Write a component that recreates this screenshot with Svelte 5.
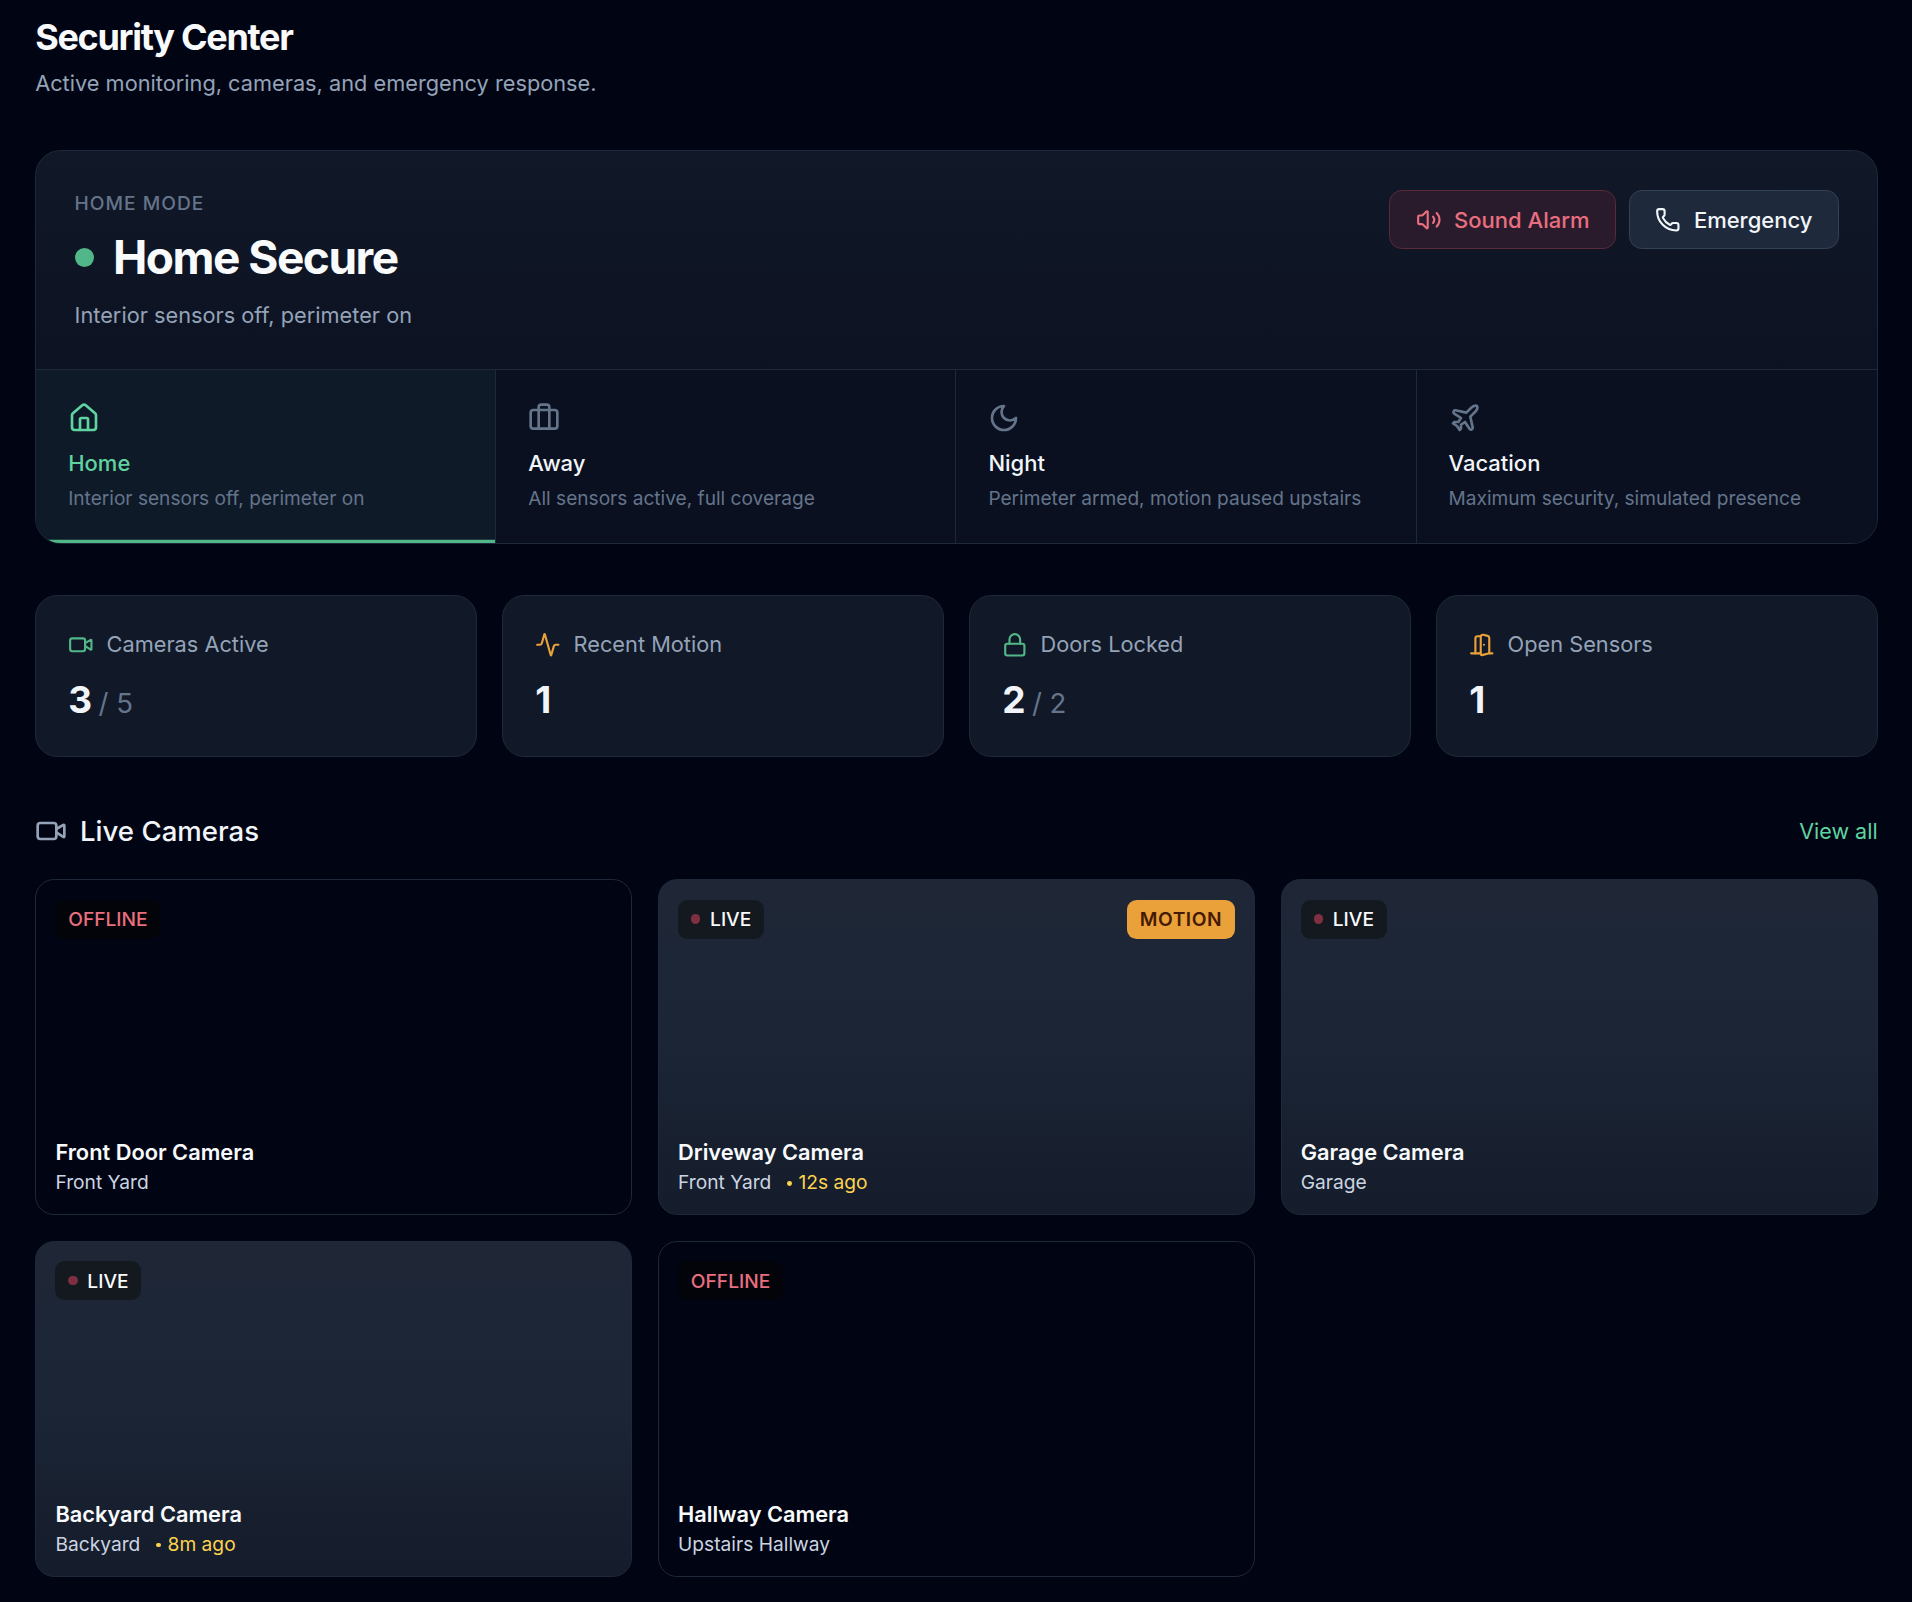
<script>
  const icons = {
    house: ['M15 21v-8a1 1 0 0 0-1-1h-4a1 1 0 0 0-1 1v8', 'M3 10a2 2 0 0 1 .709-1.528l7-6a2 2 0 0 1 2.582 0l7 6A2 2 0 0 1 21 10v9a2 2 0 0 1-2 2H5a2 2 0 0 1-2-2z'],
    briefcase: ['M16 20V4a2 2 0 0 0-2-2h-4a2 2 0 0 0-2 2v16', 'M4 6h16a2 2 0 0 1 2 2v10a2 2 0 0 1-2 2H4a2 2 0 0 1-2-2V8a2 2 0 0 1 2-2z'],
    moon: ['M12 3a6 6 0 0 0 9 9 9 9 0 1 1-9-9Z'],
    plane: ['M17.8 19.2 16 11l3.5-3.5C21 6 21.5 4 21 3c-1-.5-3 0-4.5 1.5L13 8 4.8 6.2c-.5-.1-.9.1-1.1.5l-.3.5c-.2.5-.1 1 .3 1.3L9 12l-2 3H4l-1 1 3 2 2 3 1-1v-3l3-2 3.5 5.3c.3.4.8.5 1.3.3l.5-.2c.4-.3.6-.7.5-1.2z'],
    volume: ['M11 4.702a.705.705 0 0 0-1.203-.498L6.413 7.587A1.4 1.4 0 0 1 5.416 8H3a1 1 0 0 0-1 1v6a1 1 0 0 0 1 1h2.416a1.4 1.4 0 0 1 .997.413l3.383 3.384A.705.705 0 0 0 11 19.298z', 'M16 9a5 5 0 0 1 0 6', 'M19.364 18.364a9 9 0 0 0 0-12.728'],
    phone: ['M13.832 16.568a1 1 0 0 0 1.213-.303l.355-.465A2 2 0 0 1 17 15h3a2 2 0 0 1 2 2v3a2 2 0 0 1-2 2A18 18 0 0 1 2 4a2 2 0 0 1 2-2h3a2 2 0 0 1 2 2v3a2 2 0 0 1-.8 1.6l-.468.351a1 1 0 0 0-.292 1.233 14 14 0 0 0 6.392 6.384'],
    video: ['m16 13 5.223 3.482a.5.5 0 0 0 .777-.416V7.87a.5.5 0 0 0-.752-.432L16 10.5', 'M4 6h10a2 2 0 0 1 2 2v8a2 2 0 0 1-2 2H4a2 2 0 0 1-2-2V8a2 2 0 0 1 2-2z'],
    activity: ['M22 12h-2.48a2 2 0 0 0-1.93 1.46l-2.35 8.36a.25.25 0 0 1-.48 0L9.24 2.18a.25.25 0 0 0-.48 0l-2.35 8.36A2 2 0 0 1 4.49 12H2'],
    lock: ['M5 11h14a2 2 0 0 1 2 2v7a2 2 0 0 1-2 2H5a2 2 0 0 1-2-2v-7a2 2 0 0 1 2-2z', 'M7 11V7a5 5 0 0 1 10 0v4'],
    door: ['M11 20H2', 'M11 4.562v16.157a1 1 0 0 0 1.242.97L19 20V5.562a2 2 0 0 0-1.515-1.94l-4-1A2 2 0 0 0 11 4.561z', 'M11 4H8a2 2 0 0 0-2 2v14', 'M14 12h.01', 'M22 20h-3']
  };

  const modes = [
    { icon: 'house', name: 'Home', desc: 'Interior sensors off, perimeter on', active: true },
    { icon: 'briefcase', name: 'Away', desc: 'All sensors active, full coverage' },
    { icon: 'moon', name: 'Night', desc: 'Perimeter armed, motion paused upstairs' },
    { icon: 'plane', name: 'Vacation', desc: 'Maximum security, simulated presence' }
  ];

  const stats = [
    { icon: 'video', tone: 'green', label: 'Cameras Active', value: '3', total: '/ 5' },
    { icon: 'activity', tone: 'amber', label: 'Recent Motion', value: '1' },
    { icon: 'lock', tone: 'green', label: 'Doors Locked', value: '2', total: '/ 2' },
    { icon: 'door', tone: 'amber', label: 'Open Sensors', value: '1' }
  ];

  const cameras = [
    { name: 'Front Door Camera', place: 'Front Yard', live: false },
    { name: 'Driveway Camera', place: 'Front Yard', live: true, motion: true, ago: '12s ago' },
    { name: 'Garage Camera', place: 'Garage', live: true },
    { name: 'Backyard Camera', place: 'Backyard', live: true, ago: '8m ago' },
    { name: 'Hallway Camera', place: 'Upstairs Hallway', live: false }
  ];
</script>

{#snippet icon(name, cls)}
  <svg class={cls} viewBox="0 0 24 24" fill="none" stroke="currentColor" stroke-width="2" stroke-linecap="round" stroke-linejoin="round" aria-hidden="true">
    {#each icons[name] as d}<path {d} />{/each}
  </svg>
{/snippet}

<main class="page">
  <header class="head">
    <h1>Security Center</h1>
    <p>Active monitoring, cameras, and emergency response.</p>
  </header>

  <section class="hero">
    <div class="hero-top">
      <div>
        <div class="eyebrow">HOME MODE</div>
        <div class="status"><span class="status-dot"></span><h2>Home Secure</h2></div>
        <p class="status-desc">Interior sensors off, perimeter on</p>
      </div>
      <div class="actions">
        <button class="btn danger">{@render icon('volume', 'btn-icon')}Sound Alarm</button>
        <button class="btn plain">{@render icon('phone', 'btn-icon')}Emergency</button>
      </div>
    </div>
    <div class="modes">
      {#each modes as m}
        <div class="mode" class:active={m.active}>
          {@render icon(m.icon, 'mode-icon')}
          <div class="mode-name">{m.name}</div>
          <div class="mode-desc">{m.desc}</div>
        </div>
      {/each}
    </div>
  </section>

  <section class="stats">
    {#each stats as s}
      <div class="stat">
        <div class="stat-label">
          {@render icon(s.icon, 'stat-icon ' + s.tone)}
          <span>{s.label}</span>
        </div>
        <div class="stat-value">{s.value}{#if s.total}<span class="stat-total">{s.total}</span>{/if}</div>
      </div>
    {/each}
  </section>

  <section>
    <div class="section-head">
      <div class="section-title">{@render icon('video', 'section-icon')}<h3>Live Cameras</h3></div>
      <span class="view-all">View all</span>
    </div>
    <div class="cams">
      {#each cameras as c}
        <article class="cam" class:on={c.live}>
          <div class="badges">
            {#if c.live}
              <span class="badge live"><i></i>LIVE</span>
            {:else}
              <span class="badge offline">OFFLINE</span>
            {/if}
            {#if c.motion}<span class="badge motion">MOTION</span>{/if}
          </div>
          <div class="cam-info">
            <div class="cam-name">{c.name}</div>
            <div class="cam-place">{c.place}{#if c.ago}<span class="ago"><i></i>{c.ago}</span>{/if}</div>
          </div>
        </article>
      {/each}
    </div>
  </section>
</main>

<style>
  :global(body) {
    margin: 0;
    background: #010413;
  }
  .page {
    box-sizing: border-box;
    width: 1912px;
    height: 1602px;
    padding: 13.5px 34.4px 25.6px 35.2px;
    font-family: Inter, "Liberation Sans", sans-serif;
    color: #f1f5f9;
    overflow: hidden;
  }
  .head h1 {
    margin: 0;
    font-size: 36px;
    line-height: 46px;
    font-weight: 700;
    letter-spacing: -1.3px;
    color: #f8fafc;
  }
  .head p {
    margin: 7.5px 0 0;
    font-size: 21.76px;
    line-height: 32px;
    color: #94a3b8;
  }

  .hero {
    margin-top: 51.2px;
    border: 1px solid #1e293b;
    border-radius: 25.6px;
    overflow: hidden;
    background: linear-gradient(180deg, #111827 0%, #0c1222 56%, #0a101f 100%);
  }
  .hero-top {
    display: flex;
    justify-content: space-between;
    align-items: flex-start;
    padding: 38.4px 37.6px 38.4px 38.4px;
    height: 218px;
    box-sizing: border-box;
  }
  .eyebrow {
    font-size: 19.2px;
    line-height: 27px;
    font-weight: 500;
    letter-spacing: 1px;
    color: #64748b;
  }
  .status {
    display: flex;
    align-items: center;
    gap: 19.2px;
    margin-top: 11.7px;
  }
  .status-dot {
    width: 19.2px;
    height: 19.2px;
    border-radius: 50%;
    background: #52b788;
  }
  .status h2 {
    margin: 0;
    font-size: 46px;
    line-height: 58px;
    font-weight: 700;
    letter-spacing: -1.5px;
    color: #f8fafc;
  }
  .status-desc {
    margin: 12.3px 0 0;
    font-size: 21.76px;
    line-height: 32px;
    color: #94a3b8;
  }
  .actions {
    display: flex;
    gap: 12.8px;
  }
  .btn {
    display: flex;
    align-items: center;
    gap: 12.8px;
    height: 59px;
    box-sizing: border-box;
    padding: 1px 25.6px 0;
    border-radius: 12.8px;
    font: 500 22px/32px Inter, sans-serif;
    cursor: pointer;
  }
  :global(.btn-icon) {
    width: 25.6px;
    height: 25.6px;
    flex: none;
  }
  .danger {
    background: #291b2b;
    border: 1px solid #5a2a3a;
    color: #e96f80;
  }
  .plain {
    background: #1e293b;
    border: 1px solid #334155;
    color: #f1f5f9;
  }

  .modes {
    display: grid;
    grid-template-columns: repeat(4, 1fr);
    border-top: 1px solid #1e293b;
  }
  .mode {
    padding: 32px 32px 31px;
    border-right: 1px solid #1e293b;
    background: #0a101f;
  }
  .mode:last-child {
    border-right: 0;
  }
  .mode :global(.mode-icon) {
    display: block;
    width: 32px;
    height: 32px;
    color: #64748b;
  }
  .mode-name {
    margin-top: 13px;
    font-size: 22px;
    line-height: 32px;
    font-weight: 500;
    color: #f1f5f9;
  }
  .mode-desc {
    margin-top: 5px;
    font-size: 19.1px;
    line-height: 28px;
    color: #64748b;
  }
  .mode.active {
    background: #0f1a28;
    box-shadow: inset 0 -3.2px 0 #52b788;
  }
  .mode.active :global(.mode-icon),
  .mode.active .mode-name {
    color: #5fd3a0;
  }

  .stats {
    display: grid;
    grid-template-columns: repeat(4, 1fr);
    gap: 25.6px;
    margin-top: 51.2px;
  }
  .stat {
    box-sizing: border-box;
    height: 162px;
    padding: 32px;
    border: 1px solid #1e293b;
    border-radius: 22.4px;
    background: #111827;
  }
  .stat-label {
    display: flex;
    align-items: center;
    gap: 12.8px;
    font-size: 21.76px;
    line-height: 32px;
    color: #94a3b8;
  }
  :global(.stat-icon) {
    width: 25.6px;
    height: 25.6px;
    flex: none;
  }
  :global(.stat-icon.green) { color: #52b788; }
  :global(.stat-icon.amber) { color: #eba13a; }
  .stat-value {
    margin-top: 15.5px;
    font-size: 37px;
    line-height: 48px;
    font-weight: 700;
    color: #f1f5f9;
  }
  .stat-total {
    margin-left: 6.4px;
    font-size: 27.6px;
    font-weight: 400;
    color: #64748b;
  }

  .section-head {
    display: flex;
    justify-content: space-between;
    align-items: center;
    height: 45.2px;
    margin: 51.2px 0 25.6px;
  }
  .section-title {
    display: flex;
    align-items: center;
    gap: 12.8px;
  }
  :global(.section-icon) {
    width: 32px;
    height: 32px;
    color: #94a3b8;
  }
  .section-title h3 {
    margin: 0;
    font-size: 27.6px;
    line-height: 40px;
    font-weight: 500;
    color: #f1f5f9;
  }
  .view-all {
    font-size: 21.5px;
    line-height: 32px;
    color: #5fd3a0;
  }

  .cams {
    display: grid;
    grid-template-columns: repeat(3, 1fr);
    gap: 25.6px;
  }
  .cam {
    box-sizing: border-box;
    aspect-ratio: 16 / 9;
    display: flex;
    flex-direction: column;
    justify-content: space-between;
    padding: 19.2px 19.2px 17.8px;
    border: 1px solid #1e293b;
    border-radius: 19.2px;
    background: #010413;
  }
  .cam.on {
    background: linear-gradient(180deg, #1f2737 0%, #1b2535 50%, #151c2b 100%);
  }
  .badges {
    display: flex;
    justify-content: space-between;
  }
  .badge {
    display: inline-flex;
    align-items: center;
    height: 39.2px;
    box-sizing: border-box;
    padding: 0 12.8px;
    border-radius: 9.6px;
    font-size: 19.2px;
    font-weight: 500;
  }
  .offline {
    background: #030409;
    color: #e96f80;
  }
  .live {
    gap: 9.6px;
    background: #14181f;
    color: #f8fafc;
  }
  .live i {
    width: 9.6px;
    height: 9.6px;
    border-radius: 50%;
    background: #7f2f42;
  }
  .motion {
    font-weight: 600;
    letter-spacing: 0.5px;
    background: #eba13a;
    color: #451a03;
  }
  .cam-name {
    font-size: 21.8px;
    line-height: 32px;
    font-weight: 600;
    color: #f8fafc;
  }
  .cam-place {
    font-size: 19.2px;
    line-height: 28px;
    color: #cbd5e1;
  }
  .ago {
    margin-left: 16px;
    color: #fcd34d;
  }
  .ago i {
    display: inline-block;
    width: 4.8px;
    height: 4.8px;
    margin-right: 6.4px;
    border-radius: 50%;
    background: currentColor;
    vertical-align: 3.5px;
  }
</style>
